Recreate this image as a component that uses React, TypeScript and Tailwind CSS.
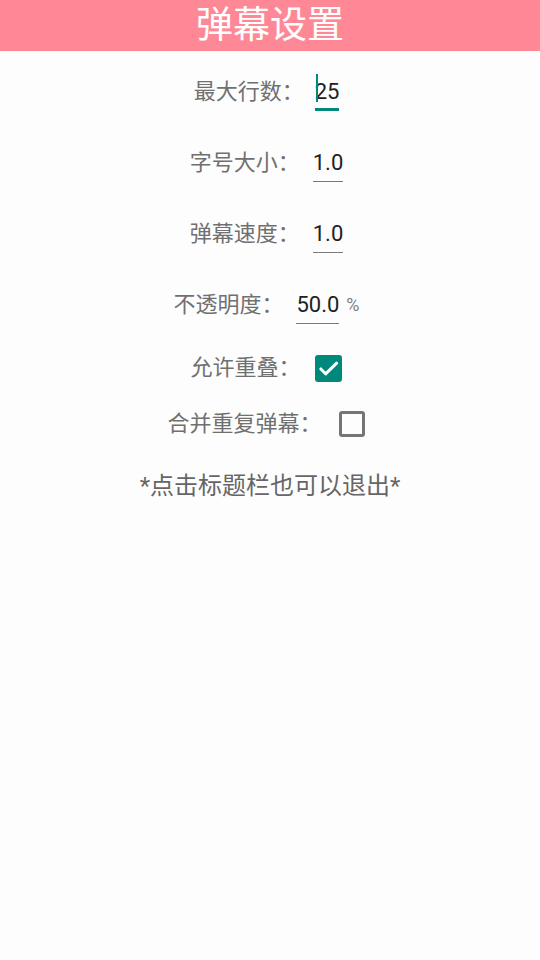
import { useState } from "react";

const font = { fontFamily: '"Roboto", "Noto Sans CJK SC", sans-serif' };

function Field({
  label,
  value,
  focused = false,
  suffix,
}: {
  label: string;
  value: string;
  focused?: boolean;
  suffix?: string;
}) {
  return (
    <div className="flex h-[71px] items-center justify-center pr-[7px]">
      <span className="text-[22px] leading-[28px] text-[#707070]">{label}</span>
      <div
        className={
          focused
            ? "relative ml-[11px] flex flex-col pt-[5px] pb-[2px] border-b-[3px] border-[#00897b]"
            : "relative ml-[13px] flex flex-col pt-[5px] pb-[4px] border-b-[1.5px] border-[#7a7a7a]"
        }
      >
        {focused && (
          <span className="absolute left-[1px] top-[1px] h-[28px] w-[2px] bg-[#00897b]" />
        )}
        <span className="text-[22px] leading-[28px] text-[#212121]">{value}</span>
      </div>
      {suffix && (
        <span className="ml-[7px] text-[18px] leading-[28px] text-[#808080]">{suffix}</span>
      )}
    </div>
  );
}

function Check({ label, checked }: { label: string; checked: boolean }) {
  const [on, setOn] = useState(checked);
  return (
    <div className="flex h-[56px] items-center justify-center pr-[8px]">
      <span className="text-[22px] leading-[28px] text-[#707070]">{label}</span>
      <button
        onClick={() => setOn(!on)}
        className={
          on
            ? "ml-[14px] flex h-[27px] w-[27px] items-center justify-center rounded-[3px] bg-[#00897b]"
            : "ml-[17px] h-[26px] w-[26px] rounded-[3px] border-[3px] border-[#757575]"
        }
      >
        {on && (
          <svg width="23" height="23" viewBox="0 0 24 24">
            <path
              d="M4 12.5l5 5L20.5 6.5"
              fill="none"
              stroke="white"
              strokeWidth="3.2"
              strokeLinecap="round"
              strokeLinejoin="round"
            />
          </svg>
        )}
      </button>
    </div>
  );
}

export default function App() {
  return (
    <div className="min-h-[960px] w-full bg-[#fdfdfd]" style={font}>
      {/* title bar */}
      <div className="flex h-[51px] items-center justify-center bg-[#ff8896]">
        <span className="text-[37px] leading-[51px] text-white">弹幕设置</span>
      </div>

      <div className="mt-[5px] flex flex-col">
        <Field label="最大行数：" value="25" focused />
        <Field label="字号大小：" value="1.0" />
        <Field label="弹幕速度：" value="1.0" />
        <Field label="不透明度：" value="50.0" suffix="%" />
        <Check label="允许重叠：" checked />
        <Check label="合并重复弹幕：" checked={false} />
        <div className="mt-[19px] text-center text-[24px] leading-[30px] text-[#666666]">
          *点击标题栏也可以退出*
        </div>
      </div>
    </div>
  );
}
